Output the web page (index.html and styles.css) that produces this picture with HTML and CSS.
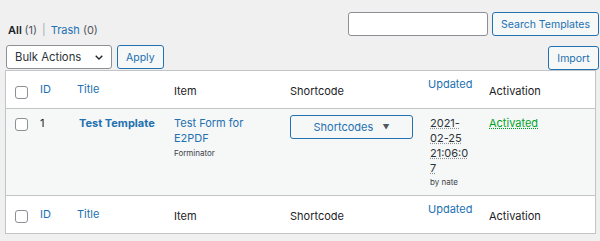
FILE: index.html
```html
<!DOCTYPE html>
<html lang="en">
  <head>
    <meta charset="UTF-8" />
    <meta name="viewport" content="width=device-width, initial-scale=1.0" />
    <title>Templates</title>
    <link rel="stylesheet" href="styles.css">
  </head>
  <body>
    <div class="wrap">
      <div class="top__row">
        <ul class="subsubsub">
          <li class="current">All <span class="count">(1)</span></li>
          <li class="sep">|</li>
          <li><a href="#">Trash</a> <span class="count">(0)</span></li>
        </ul>
        <div class="search__box">
          <input type="search" class="search__input" />
          <button class="btn">Search Templates</button>
        </div>
      </div>

      <div class="tablenav">
        <div class="tablenav__left">
          <div class="select">
            <span>Bulk Actions</span>
            <svg width="8" height="5" viewBox="0 0 8 5"><path d="M0.7 0.7 L4 4 L7.3 0.7" fill="none" stroke="#1d2327" stroke-width="1.3"/></svg>
          </div>
          <button class="btn">Apply</button>
        </div>
        <button class="btn btn--import">Import</button>
      </div>

      <table class="list__table">
        <colgroup>
          <col class="col--cb" />
          <col class="col--id" />
          <col class="col--title" />
          <col class="col--item" />
          <col class="col--short" />
          <col class="col--updated" />
          <col class="col--act" />
        </colgroup>
        <thead>
          <tr>
            <th class="cb"><span class="checkbox"></span></th>
            <th class="sortable"><a href="#">ID</a></th>
            <th class="sortable"><a href="#">Title</a></th>
            <th>Item</th>
            <th>Shortcode</th>
            <th class="updated"><a href="#">Updated</a></th>
            <th>Activation</th>
          </tr>
        </thead>
        <tbody>
          <tr>
            <td class="cb"><span class="checkbox"></span></td>
            <td>1</td>
            <td class="title"><a href="#">Test Template</a></td>
            <td class="item">
              <a href="#">Test Form for E2PDF</a>
              <div class="small">Forminator</div>
            </td>
            <td class="short">
              <button class="btn btn--short">Shortcodes <span class="caret">&#9660;</span></button>
            </td>
            <td class="date">
              <abbr title="2021-02-25 21:06:07">2021-<br>02-25<br>21:06:0<br>7</abbr>
              <div class="small">by nate</div>
            </td>
            <td><span class="activated">Activated</span></td>
          </tr>
        </tbody>
        <tfoot>
          <tr>
            <th class="cb"><span class="checkbox"></span></th>
            <th class="sortable"><a href="#">ID</a></th>
            <th class="sortable"><a href="#">Title</a></th>
            <th>Item</th>
            <th>Shortcode</th>
            <th class="updated"><a href="#">Updated</a></th>
            <th>Activation</th>
          </tr>
        </tfoot>
      </table>
    </div>
  </body>
</html>
```

FILE: styles.css
```css
body {
  margin: 0;
  background-color: #f0f0f1;
  font-family: Inter, "Noto Sans", sans-serif;
  font-size: 11px;
  color: #1d2327;
}

a {
  color: #2271b1;
  text-decoration: none;
}

.wrap {
  padding: 12px 1px 0 5px;
}

.top__row {
  display: flex;
  justify-content: space-between;
  align-items: flex-start;
}

.subsubsub {
  list-style: none;
  margin: 0;
  padding: 11px 0 0 3px;
  display: flex;
  line-height: 15px;
}

.subsubsub .current {
  font-weight: 600;
}

.subsubsub .count {
  font-weight: 400;
  color: #50575e;
}

.subsubsub .sep {
  color: #a7aaad;
  padding: 0 5px;
}

.search__box {
  display: flex;
  gap: 4px;
}

.search__input {
  box-sizing: border-box;
  width: 140px;
  height: 24px;
  border: 1px solid #8c8f94;
  border-radius: 3px;
  background: #fff;
  margin: 0;
}

.btn {
  box-sizing: border-box;
  height: 24px;
  padding: 0 8px;
  font-family: inherit;
  font-size: 10.5px;
  background-color: #f6f7f7;
  color: #2271b1;
  border: 1px solid #2271b1;
  border-radius: 3px;
  cursor: pointer;
  margin: 0;
}

.tablenav {
  display: flex;
  justify-content: space-between;
  align-items: flex-end;
  margin-top: 7px;
  height: 25px;
}

.tablenav__left {
  display: flex;
  gap: 5px;
  align-self: flex-start;
  margin-left: 1px;
}

.select {
  box-sizing: border-box;
  width: 106px;
  height: 24px;
  display: flex;
  align-items: center;
  justify-content: space-between;
  padding: 0 8px;
  border: 1px solid #8c8f94;
  border-radius: 3px;
  background: #fff;
  font-size: 11.3px;
  color: #2c3338;
}

.btn--import {
  width: 51px;
  padding: 0;
}

.list__table {
  width: 591px;
  table-layout: fixed;
  border-collapse: separate;
  border-spacing: 0;
  border: 1px solid #c3c4c7;
  background: #fff;
  box-shadow: 0 1px 1px rgba(0, 0, 0, 0.04);
}

.col--cb { width: 27px; }
.col--id { width: 37px; }
.col--title { width: 97px; }
.col--item { width: 116px; }
.col--short { width: 138px; }
.col--updated { width: 61px; }
.col--act { width: 113px; }

.list__table th {
  padding: 13px 7px 9px;
  text-align: left;
  font-weight: 400;
  vertical-align: top;
  line-height: 15px;
}

.list__table thead th {
  border-bottom: 1px solid #c3c4c7;
}

.list__table tfoot th {
  border-top: 1px solid #c3c4c7;
}

.list__table th.sortable {
  padding-top: 11px;
  padding-bottom: 11px;
}

.list__table th.updated {
  padding-top: 6px;
  padding-bottom: 16px;
}

.list__table th.cb {
  padding: 15px 0 9px 9px;
}

.list__table tfoot th.cb {
  padding-top: 14px;
  padding-bottom: 10px;
}

.list__table tbody tr {
  background-color: #f6f7f7;
}

.list__table td {
  vertical-align: top;
  padding: 7px;
  line-height: 15px;
}

.list__table td.cb {
  padding: 9px 0 0 9px;
}

.checkbox {
  display: block;
  box-sizing: border-box;
  width: 13px;
  height: 13px;
  border: 1px solid #8c8f94;
  border-radius: 3px;
  background: #fff;
}

td.title {
  font-weight: 700;
}

td.title a {
  display: block;
  padding-left: 2px;
}

.small {
  font-size: 8px;
  line-height: 13px;
  color: #3c434a;
}

td.item .small {
  margin-top: 1px;
}

.list__table td.short {
  padding-top: 6px;
}

.btn--short {
  width: 123px;
  font-size: 11px;
}

.caret {
  color: #50575e;
  font-size: 7px;
  margin-left: 6px;
  vertical-align: 1px;
}

.list__table td.date {
  padding-left: 9px;
  padding-right: 0;
  padding-bottom: 6px;
  height: 71px;
}

abbr {
  color: #2c3338;
  text-decoration: underline dotted #8c8f94;
}

.activated {
  color: #00a32a;
  text-decoration: underline dotted #00a32a;
}
```
